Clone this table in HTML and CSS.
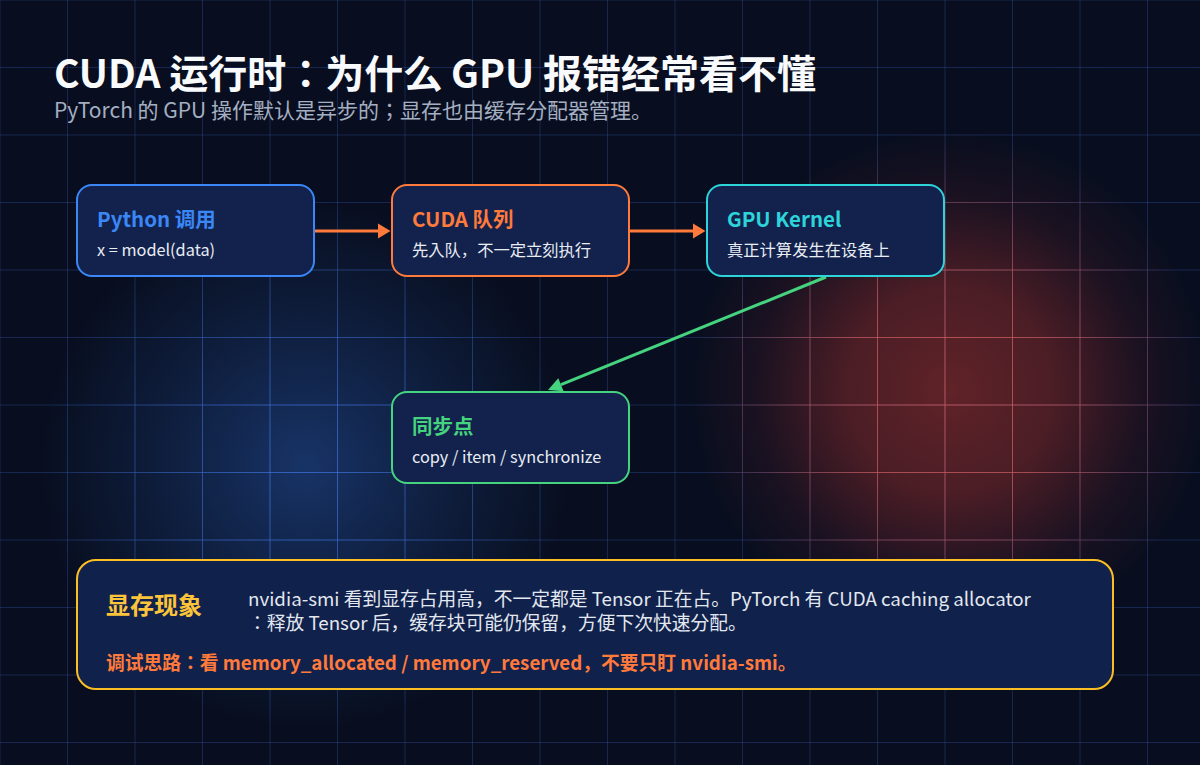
FILE: index.html
```html
<!DOCTYPE html>
<html lang="ja">
<head>
<meta charset="utf-8">
<title>CUDA 运行时</title>
<link rel="stylesheet" href="styles.css">
</head>
<body>
<div class="page">
  <header class="header">
    <h1 class="title">CUDA 运行时：为什么 GPU 报错经常看不懂</h1>
    <p class="subtitle">PyTorch 的 GPU 操作默认是异步的；显存也由缓存分配器管理。</p>
  </header>

  <section class="diagram">
    <svg class="arrows" width="869" height="300" viewBox="0 0 869 300" aria-hidden="true">
      <line x1="239" y1="47" x2="303" y2="47" stroke="#ff7a3b" stroke-width="3"/>
      <polygon points="302,39.5 314.5,47 302,54.5" fill="#ff7a3b"/>
      <line x1="554" y1="47" x2="618" y2="47" stroke="#ff7a3b" stroke-width="3"/>
      <polygon points="617,39.5 629.5,47 617,54.5" fill="#ff7a3b"/>
      <line x1="750" y1="93" x2="485" y2="200.7" stroke="#46d37f" stroke-width="3"/>
      <polygon points="472,206 487.6,207.2 482.3,194.3" fill="#46d37f"/>
    </svg>
    <div class="node node-blue">
      <div class="node-title">Python 调用</div>
      <div class="node-text">x = model(data)</div>
    </div>
    <div class="node node-orange">
      <div class="node-title">CUDA 队列</div>
      <div class="node-text">先入队，不一定立刻执行</div>
    </div>
    <div class="node node-cyan">
      <div class="node-title">GPU Kernel</div>
      <div class="node-text">真正计算发生在设备上</div>
    </div>
    <div class="node node-green node-sync">
      <div class="node-title">同步点</div>
      <div class="node-text">copy / item / synchronize</div>
    </div>
  </section>

  <section class="card">
    <div class="card-row">
      <div class="card-label">显存现象</div>
      <p class="card-text">
        <span class="line">nvidia-smi 看到显存占用高，不一定都是 Tensor 正在占。PyTorch 有 CUDA caching allocator</span>
        <span class="line">：释放 Tensor 后，缓存块可能仍保留，方便下次快速分配。</span>
      </p>
    </div>
    <p class="card-tip">调试思路：看 memory_allocated / memory_reserved，不要只盯 nvidia-smi。</p>
  </section>
</div>
</body>
</html>
```

FILE: styles.css
```css
html, body {
  margin: 0;
  padding: 0;
}

body {
  width: 1200px;
  height: 765px;
  overflow: hidden;
  position: relative;
  font-family: "Noto Sans CJK JP", "Noto Sans", sans-serif;
  color: #e6ebf3;
  background:
    linear-gradient(to right, rgba(58, 96, 190, 0.30) 1px, transparent 1px) 67px 0 / 67.5px 67.5px,
    linear-gradient(to bottom, rgba(58, 96, 190, 0.30) 1px, transparent 1px) 0 67px / 67.5px 67.5px,
    radial-gradient(circle 260px at 950px 390px, rgba(100, 36, 40, 0.95) 0%, rgba(92, 33, 39, 0.8) 40%, rgba(60, 24, 36, 0.35) 75%, rgba(8, 14, 31, 0) 100%),
    radial-gradient(circle 265px at 305px 465px, rgba(26, 58, 115, 0.85) 0%, rgba(22, 48, 96, 0.5) 50%, rgba(8, 14, 31, 0) 100%),
    #080e1f;
}

body::before,
body::after {
  content: "";
  position: absolute;
  inset: 0;
  pointer-events: none;
}

/* warm-tinted grid lines inside the red glow */
body::before {
  background:
    linear-gradient(to right, rgba(225, 92, 82, 0.75) 1px, transparent 1px) 67px 0 / 67.5px 67.5px,
    linear-gradient(to bottom, rgba(225, 92, 82, 0.75) 1px, transparent 1px) 0 67px / 67.5px 67.5px;
  -webkit-mask-image: radial-gradient(circle 260px at 950px 390px, rgba(0,0,0,1) 0%, rgba(0,0,0,0.8) 45%, rgba(0,0,0,0) 100%);
  mask-image: radial-gradient(circle 260px at 950px 390px, rgba(0,0,0,1) 0%, rgba(0,0,0,0.8) 45%, rgba(0,0,0,0) 100%);
}

/* brighter blue grid lines inside the blue glow */
body::after {
  background:
    linear-gradient(to right, rgba(70, 125, 240, 0.55) 1px, transparent 1px) 67px 0 / 67.5px 67.5px,
    linear-gradient(to bottom, rgba(70, 125, 240, 0.55) 1px, transparent 1px) 0 67px / 67.5px 67.5px;
  -webkit-mask-image: radial-gradient(circle 265px at 305px 465px, rgba(0,0,0,1) 0%, rgba(0,0,0,0.6) 50%, rgba(0,0,0,0) 100%);
  mask-image: radial-gradient(circle 265px at 305px 465px, rgba(0,0,0,1) 0%, rgba(0,0,0,0.6) 50%, rgba(0,0,0,0) 100%);
}

.page {
  position: relative;
  z-index: 1;
  padding: 0 0 0 76px;
}

/* header */
.header {
  padding-top: 47px;
  margin-left: -22px;
}

.title {
  margin: 0;
  font-size: 39px;
  line-height: 48px;
  font-weight: 700;
  color: #f8fafc;
}

.subtitle {
  margin: 2px 0 0;
  font-size: 21px;
  line-height: 24px;
  font-weight: 400;
  color: #a4afc2;
}

/* diagram */
.diagram {
  position: relative;
  margin-top: 63px;
  width: 869px;
  display: grid;
  grid-template-columns: 239px 239px 239px;
  grid-template-rows: 93px 93px;
  column-gap: 76px;
  row-gap: 114px;
}

.arrows {
  position: absolute;
  left: 0;
  top: 0;
  z-index: 0;
  overflow: visible;
}

.node {
  position: relative;
  z-index: 1;
  box-sizing: border-box;
  border: 2px solid;
  border-radius: 16px;
  background: #12224c;
  padding: 20px 19px 0;
}

.node-title {
  font-size: 20.5px;
  line-height: 24px;
  font-weight: 700;
}

.node-text {
  margin-top: 9px;
  font-size: 16.3px;
  line-height: 20px;
  color: #e8ecf3;
}

.node-blue { border-color: #3b87f6; }
.node-blue .node-title { color: #3b87f6; }

.node-orange { border-color: #ff7a3b; }
.node-orange .node-title { color: #ff7a3b; }

.node-cyan { border-color: #2dd4da; }
.node-cyan .node-title { color: #2dd4da; }

.node-green { border-color: #46d37f; }
.node-green .node-title { color: #46d37f; }

.node-sync {
  grid-column: 2;
  grid-row: 2;
}

/* bottom card */
.card {
  box-sizing: border-box;
  width: 1038px;
  margin-top: 75px;
  border: 2px solid #fbbf24;
  border-radius: 20px;
  background: #10214b;
  padding: 25px 28px 14px;
}

.card-row {
  display: flex;
  align-items: flex-start;
}

.card-label {
  width: 142px;
  flex: none;
  margin-top: 6px;
  font-size: 24px;
  line-height: 24px;
  font-weight: 700;
  color: #fcc43b;
}

.card-text {
  margin: 0;
  font-size: 18.75px;
  line-height: 24px;
  color: #e3e8f0;
}

.card-text .line {
  display: block;
  white-space: nowrap;
}

.card-tip {
  margin: 16px 0 0;
  font-size: 18.75px;
  line-height: 24px;
  font-weight: 700;
  color: #ff7a3b;
}
```
